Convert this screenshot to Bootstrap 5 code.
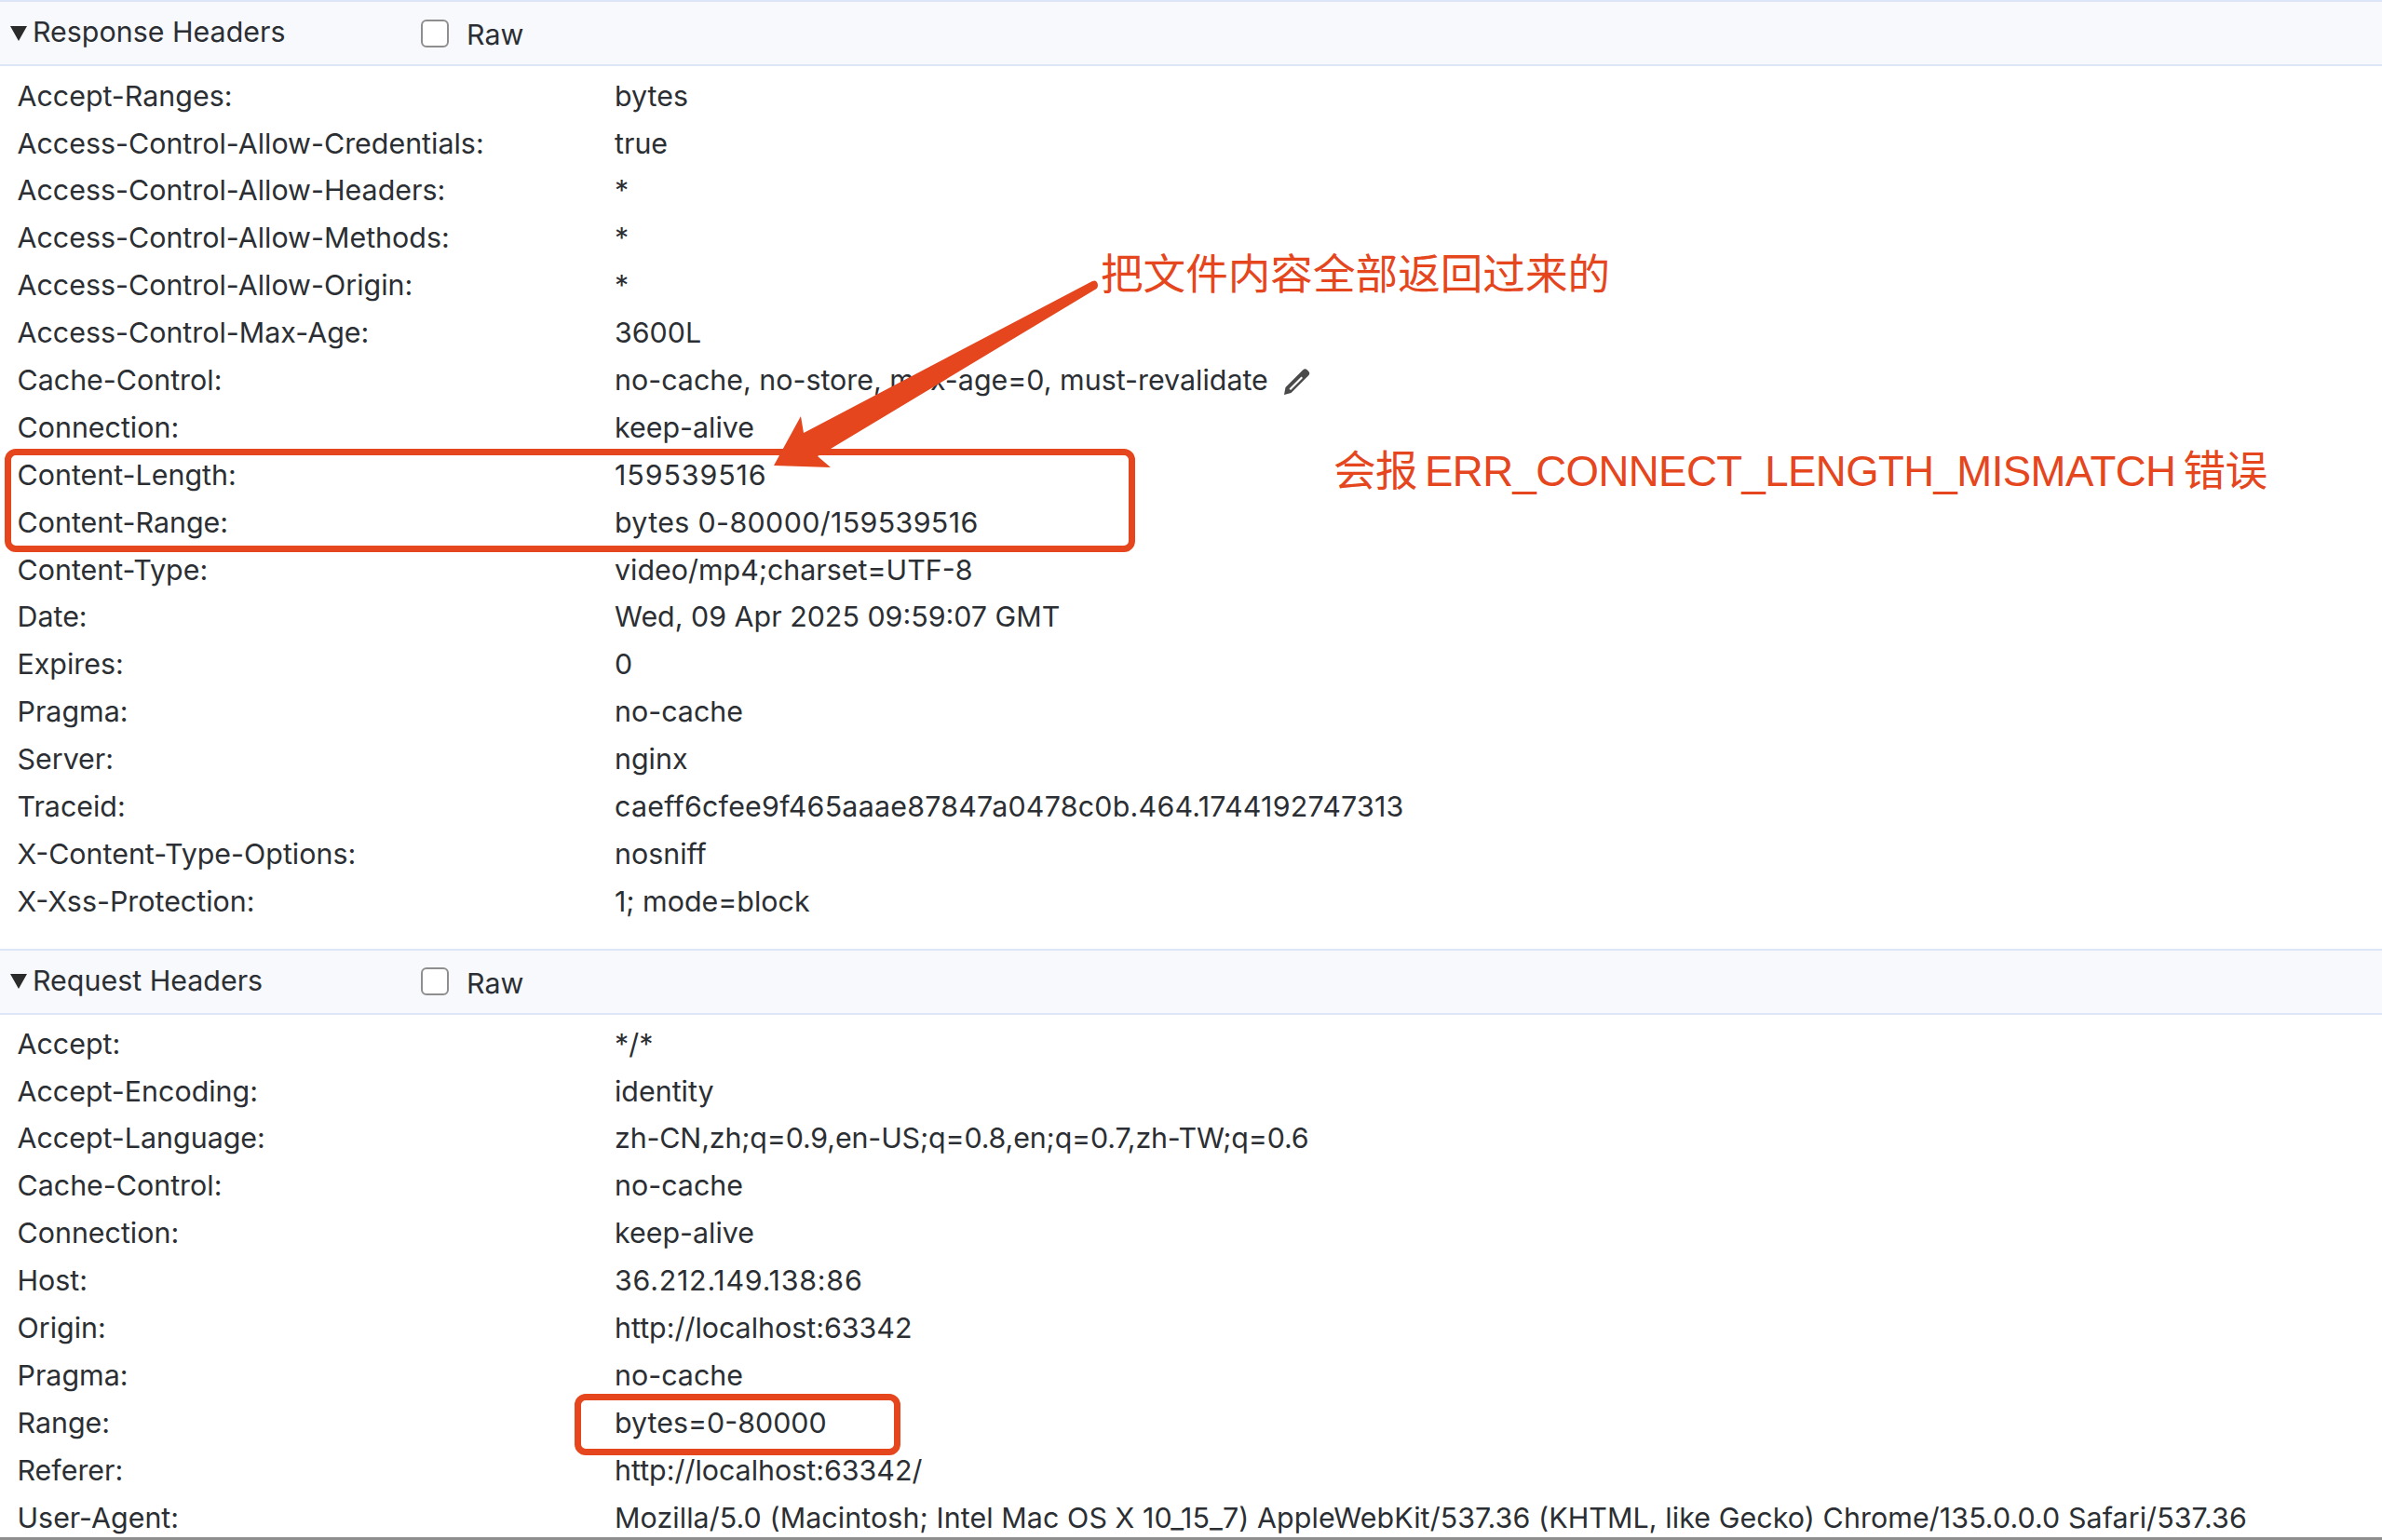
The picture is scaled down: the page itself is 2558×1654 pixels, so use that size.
<!DOCTYPE html>
<html lang="zh"><head><meta charset="utf-8"><title>Headers</title>
<link href="https://cdn.jsdelivr.net/npm/bootstrap@5.3.0/dist/css/bootstrap.min.css" rel="stylesheet">
<style>
html,body{margin:0;background:#fff;overflow:hidden}
.stage{position:relative;width:2558px;height:1654px;overflow:hidden;font-family:Inter,"Liberation Sans",sans-serif;font-size:30.4px;color:#2b2f33;border-bottom:3px solid #8f8f8f}
.sec-head{height:71px;background:#f8f9fd;border-top:2px solid #dde6f7;border-bottom:2px solid #dde6f7;padding-left:11px}
.tri{width:18px;height:16px;flex:none}
.sec-title{margin-left:6px;width:417px;flex:none;padding-bottom:1px}
.raw-box{width:30px;height:30px;border:2px solid #8e8e8e;border-radius:6px;background:#fff;flex:none}
.raw-txt{margin-left:19px;padding-top:5px}
.rows-a{padding:7px 0 24.500px 18.500px}
.rows-b{padding:6.500px 0 0 18.500px}
.hrow{height:50.9px;white-space:nowrap}
.hname{width:641.500px;flex:none}
.pen{width:30px;height:30px;margin-left:16px;flex:none}
.digits-wide{letter-spacing:.9px}
.digits-dot{letter-spacing:.77px}
.digits-mix{letter-spacing:.35px}
.digits-id{letter-spacing:.23px}
.ua-txt{letter-spacing:.085px}
.lang-txt{letter-spacing:-.14px}
.mark-layer{position:absolute;left:0;top:0;width:2558px;height:1654px;pointer-events:none}
.note{position:absolute;color:#e5461d;font-family:"Liberation Sans","Noto Sans CJK SC",sans-serif;font-size:45.6px;line-height:1;white-space:nowrap}
.note1{left:1182px;top:272.500px}
.note2{left:1432px;top:483.500px;letter-spacing:-.6px;word-spacing:-4px}
.redbox{position:absolute;border:7px solid #e5461d;border-radius:12px}
.rb1{left:5px;top:482px;width:1214px;height:111px}
.rb2{left:617px;top:1497px;width:350px;height:66px}
</style></head><body>
<div class="stage">
<section>
<div class="sec-head d-flex align-items-center"><svg class="tri" viewBox="0 0 18 16"><path d="M0 0H18L9 16Z" fill="#2b2b2b"/></svg><span class="sec-title">Response Headers</span><span class="raw-box"></span><span class="raw-txt">Raw</span></div>
<div class="rows-a">
<div class="hrow d-flex align-items-center"><span class="hname">Accept-Ranges:</span><span>bytes</span></div>
<div class="hrow d-flex align-items-center"><span class="hname">Access-Control-Allow-Credentials:</span><span>true</span></div>
<div class="hrow d-flex align-items-center"><span class="hname">Access-Control-Allow-Headers:</span><span>*</span></div>
<div class="hrow d-flex align-items-center"><span class="hname">Access-Control-Allow-Methods:</span><span>*</span></div>
<div class="hrow d-flex align-items-center"><span class="hname">Access-Control-Allow-Origin:</span><span>*</span></div>
<div class="hrow d-flex align-items-center"><span class="hname">Access-Control-Max-Age:</span><span>3600L</span></div>
<div class="hrow d-flex align-items-center"><span class="hname">Cache-Control:</span><span>no-cache, no-store, max-age=0, must-revalidate</span><svg class="pen" viewBox="0 0 30 30"><path d="M2.500 22L21 3.500a3.500 3.500 0 0 1 5 0l1 1a3.500 3.500 0 0 1 0 5L8.500 28l-7.500 2Z" fill="#4a4a4a"/><path d="M6.500 23.500L19.500 10.500l1.500 1.500L8 25Z" fill="#fff"/></svg></div>
<div class="hrow d-flex align-items-center"><span class="hname">Connection:</span><span>keep-alive</span></div>
<div class="hrow d-flex align-items-center"><span class="hname">Content-Length:</span><span class="digits-wide">159539516</span></div>
<div class="hrow d-flex align-items-center"><span class="hname">Content-Range:</span><span class="digits-mix">bytes 0-80000/159539516</span></div>
<div class="hrow d-flex align-items-center"><span class="hname">Content-Type:</span><span>video/mp4;charset=UTF-8</span></div>
<div class="hrow d-flex align-items-center"><span class="hname">Date:</span><span>Wed, 09 Apr 2025 09:59:07 GMT</span></div>
<div class="hrow d-flex align-items-center"><span class="hname">Expires:</span><span>0</span></div>
<div class="hrow d-flex align-items-center"><span class="hname">Pragma:</span><span>no-cache</span></div>
<div class="hrow d-flex align-items-center"><span class="hname">Server:</span><span>nginx</span></div>
<div class="hrow d-flex align-items-center"><span class="hname">Traceid:</span><span class="digits-id">caeff6cfee9f465aaae87847a0478c0b.464.1744192747313</span></div>
<div class="hrow d-flex align-items-center"><span class="hname">X-Content-Type-Options:</span><span>nosniff</span></div>
<div class="hrow d-flex align-items-center"><span class="hname">X-Xss-Protection:</span><span>1; mode=block</span></div>
</div>
</section>
<section>
<div class="sec-head d-flex align-items-center"><svg class="tri" viewBox="0 0 18 16"><path d="M0 0H18L9 16Z" fill="#2b2b2b"/></svg><span class="sec-title">Request Headers</span><span class="raw-box"></span><span class="raw-txt">Raw</span></div>
<div class="rows-b">
<div class="hrow d-flex align-items-center"><span class="hname">Accept:</span><span>*/*</span></div>
<div class="hrow d-flex align-items-center"><span class="hname">Accept-Encoding:</span><span>identity</span></div>
<div class="hrow d-flex align-items-center"><span class="hname">Accept-Language:</span><span class="lang-txt">zh-CN,zh;q=0.9,en-US;q=0.8,en;q=0.7,zh-TW;q=0.6</span></div>
<div class="hrow d-flex align-items-center"><span class="hname">Cache-Control:</span><span>no-cache</span></div>
<div class="hrow d-flex align-items-center"><span class="hname">Connection:</span><span>keep-alive</span></div>
<div class="hrow d-flex align-items-center"><span class="hname">Host:</span><span class="digits-dot">36.212.149.138:86</span></div>
<div class="hrow d-flex align-items-center"><span class="hname">Origin:</span><span>http://localhost:63342</span></div>
<div class="hrow d-flex align-items-center"><span class="hname">Pragma:</span><span>no-cache</span></div>
<div class="hrow d-flex align-items-center"><span class="hname">Range:</span><span>bytes=0-80000</span></div>
<div class="hrow d-flex align-items-center"><span class="hname">Referer:</span><span>http://localhost:63342/</span></div>
<div class="hrow d-flex align-items-center"><span class="hname">User-Agent:</span><span class="ua-txt">Mozilla/5.0 (Macintosh; Intel Mac OS X 10_15_7) AppleWebKit/537.36 (KHTML, like Gecko) Chrome/135.0.0.0 Safari/537.36</span></div>
</div>
</section>
<div class="mark-layer">
<div class="redbox rb1"></div>
<div class="redbox rb2"></div>
<svg class="position-absolute top-0 start-0" width="2558" height="1654" viewBox="0 0 2558 1654"><path d="M1173 302Q1178 300 1179 306Q1179 310 1176 311L892 482L878 490L892 502L831 500L860 447L863 465Z" fill="#e5461d"/></svg>
<div class="note note1">把文件内容全部返回过来的</div>
<div class="note note2">会报 ERR_CONNECT_LENGTH_MISMATCH 错误</div>
</div>
</div>
</body></html>
